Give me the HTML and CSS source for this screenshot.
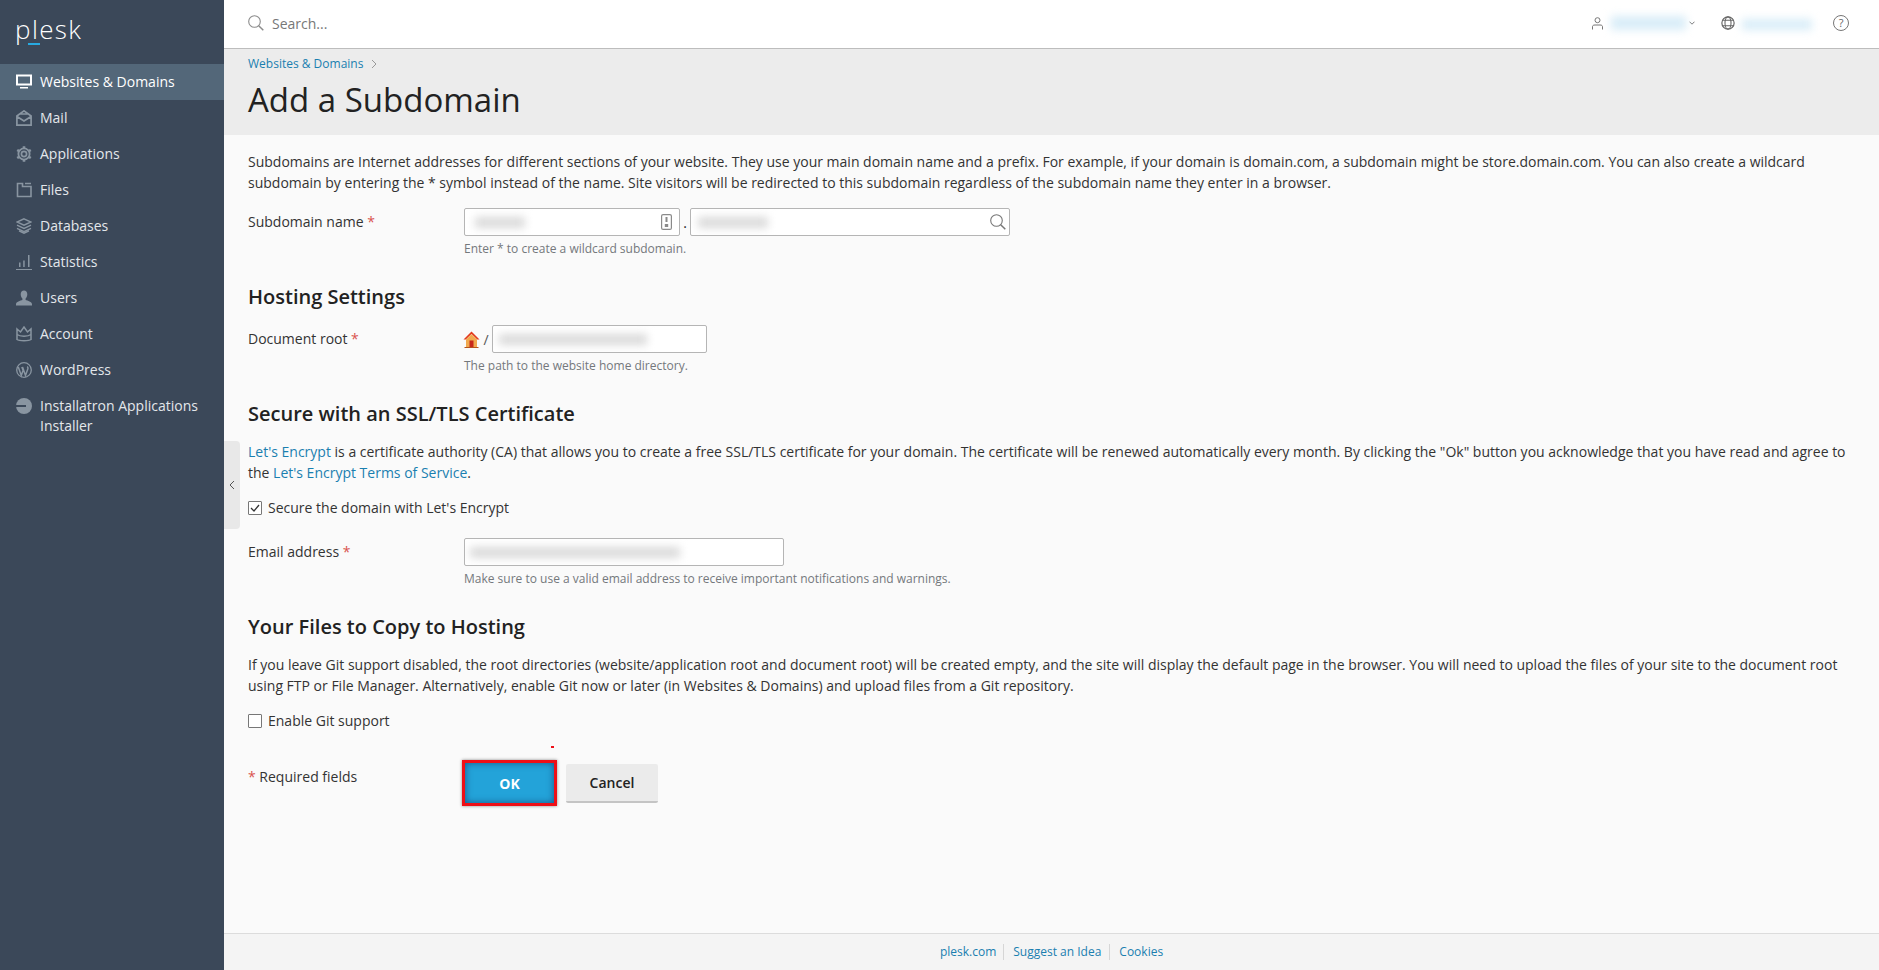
FILE: index.html
```html
<!DOCTYPE html>
<html lang="en">
<head>
<meta charset="utf-8">
<title>Add a Subdomain</title>
<link rel="stylesheet" href="styles.css">
</head>
<body>
<div class="app">
  <aside class="sidebar">
    <div class="logo"><span class="logo-text">plesk</span><span class="logo-bar"></span></div>
    <nav class="nav">
      <a class="nav-item active"><svg class="nav-icon" viewBox="0 0 16 16"><path d="M0 0.5h16v11H0z M2 2.500v7h12v-7z M4 13h8v1.600H4z" fill="#fff" fill-rule="evenodd"/></svg><span>Websites &amp; Domains</span></a>
      <a class="nav-item"><svg class="nav-icon" viewBox="0 0 16 16"><path d="M.9 6L8 .9 15.100 6v9.100H.9z M.9 6.500L8 11l7.100-4.500 M3.500 4.800V4h9v.8" fill="none" stroke="#8995a1" stroke-width="1.700"/></svg><span>Mail</span></a>
      <a class="nav-item"><svg class="nav-icon" viewBox="0 0 16 16"><circle cx="8" cy="8" r="2.600" fill="none" stroke="#8995a1" stroke-width="1.700"/><circle cx="8" cy="8" r="5.600" fill="none" stroke="#8995a1" stroke-width="1.800"/><path d="M8 .2v2.400M8 13.400v2.400M1.200 4l2 1.200M12.800 10.800l2 1.200M1.200 12l2-1.200M12.800 5.200l2-1.200" stroke="#8995a1" stroke-width="2.600"/></svg><span>Applications</span></a>
      <a class="nav-item"><svg class="nav-icon" viewBox="0 0 16 16"><path d="M1.500 1.500h5v3h8.500v10h-13.500z M9 1.500h6" fill="none" stroke="#8995a1" stroke-width="1.600"/></svg><span>Files</span></a>
      <a class="nav-item"><svg class="nav-icon" viewBox="0 0 16 16"><path d="M8 .8l7 3.200-7 3.200L1 4z" fill="none" stroke="#8995a1" stroke-width="1.400"/><path d="M1 7.200l7 3.200 7-3.200M1 10.400l7 3.200 7-3.200M3 12.800l5 2.400 5-2.400" fill="none" stroke="#8995a1" stroke-width="1.400"/></svg><span>Databases</span></a>
      <a class="nav-item"><svg class="nav-icon" viewBox="0 0 16 16"><path d="M0 15h16v1.200H0z M3 8.500h1.500V13H3z M7.200 6.500h1.500V13H7.200z M12 1h1.500v12H12z" fill="#8995a1"/></svg><span>Statistics</span></a>
      <a class="nav-item"><svg class="nav-icon" viewBox="0 0 16 16"><path d="M8 .5c2 0 3.300 1.500 3.300 3.800 0 1.800-.8 3.300-1.700 4.200v1.500c2 .7 6.400 1.700 6.400 4.200v1.300H0V14.200c0-2.500 4.400-3.500 6.400-4.200V8.500C5.500 7.600 4.700 6.100 4.700 4.300 4.700 2 6 .5 8 .5z" fill="#8995a1"/></svg><span>Users</span></a>
      <a class="nav-item"><svg class="nav-icon" viewBox="0 0 16 16"><path d="M1 3l3.500 3L8 1l3.500 5L15 3v10.500c-2 1.500-12 1.500-14 0z M1 8.500c3 2.200 11 2.200 14 0" fill="none" stroke="#8995a1" stroke-width="1.500"/></svg><span>Account</span></a>
      <a class="nav-item"><svg class="nav-icon" viewBox="0 0 16 16"><circle cx="8" cy="8" r="7.300" fill="none" stroke="#8995a1" stroke-width="1.300"/><path d="M2.300 5l3 8.500 1.800-5.200L5.800 5M6.500 5l3 8.500 2.300-6.500c.4-1.100 0-2-.8-2.200" fill="none" stroke="#8995a1" stroke-width="1.500"/></svg><span>WordPress</span></a>
      <a class="nav-item"><svg class="nav-icon" viewBox="0 0 16 16"><circle cx="8" cy="8" r="8" fill="#8995a1"/><rect x="0" y="7" width="10" height="2" fill="#3b4859"/></svg><span>Installatron Applications Installer</span></a>
    </nav>
  </aside>
  <div class="main">
    <header class="topbar">
      <div class="search">
        <svg class="search-icon" viewBox="0 0 16 16"><circle cx="6.500" cy="6.500" r="5.800" fill="none" stroke="#8c8c8c" stroke-width="1.100"/><path d="M10.700 10.700l4.600 4.600" stroke="#8c8c8c" stroke-width="1.500"/></svg>
        <span>Search...</span>
      </div>
      <div class="top-actions">
        <svg class="top-user" viewBox="0 0 11 13"><circle cx="5.500" cy="3.200" r="2.500" fill="none" stroke="#777" stroke-width="1"/><path d="M.5 12.500V9.500c0-1 1-1.500 2.500-1.500h5c1.500 0 2.500.5 2.500 1.500v3" fill="none" stroke="#777" stroke-width="1"/></svg>
        <div class="blur-user"></div>
        <svg class="top-caret" viewBox="0 0 6 4"><path d="M.5.700L3 3.200 5.500.700" fill="none" stroke="#777" stroke-width="1"/></svg>
        <svg class="top-globe" viewBox="0 0 13 13"><circle cx="6.500" cy="6.500" r="5.700" fill="none" stroke="#666" stroke-width="1.100"/><ellipse cx="6.500" cy="6.500" rx="2.800" ry="5.700" fill="none" stroke="#666" stroke-width="1"/><path d="M1.500 4h10M1.500 9h10" stroke="#666" stroke-width="1"/></svg>
        <div class="blur-domain"></div>
        <div class="help">?</div>
      </div>
    </header>
    <section class="page-head">
      <div class="crumbs"><a class="link">Websites &amp; Domains</a><svg class="crumb-chev" viewBox="0 0 6 10"><path d="M1 1l4 4-4 4" fill="none" stroke="#999" stroke-width="1"/></svg></div>
      <h1 class="title">Add a Subdomain</h1>
    </section>
    <main class="content">
      <p class="para">Subdomains are Internet addresses for different sections of your website. They use your main domain name and a prefix. For example, if your domain is domain.com, a subdomain might be store.domain.com. You can also create a wildcard subdomain by entering the * symbol instead of the name. Site visitors will be redirected to this subdomain regardless of the subdomain name they enter in a browser.</p>

      <div class="row row-sub">
        <label class="label">Subdomain name <span class="req">*</span></label>
        <div class="field">
          <div class="inputs">
            <div class="input w-sub"><div class="blur-val bv-sub"></div>
              <svg class="key" viewBox="0 0 11 16"><rect x=".6" y=".6" width="9.800" height="14.800" rx="1.500" fill="none" stroke="#8a8a8a" stroke-width="1.200"/><path d="M5.500 3v5" stroke="#8a8a8a" stroke-width="2"/><rect x="3.800" y="10" width="3.400" height="3" fill="#8a8a8a"/></svg>
            </div>
            <span class="dot">.</span>
            <div class="input w-dom"><div class="blur-val bv-dom"></div>
              <svg class="mag" viewBox="0 0 16 16"><circle cx="6.500" cy="6.500" r="5.800" fill="none" stroke="#777" stroke-width="1.100"/><path d="M10.700 10.700l4.600 4.600" stroke="#777" stroke-width="1.500"/></svg>
            </div>
          </div>
          <div class="hint">Enter * to create a wildcard subdomain.</div>
        </div>
      </div>

      <h2 class="section h-host">Hosting Settings</h2>
      <div class="row row-doc">
        <label class="label">Document root <span class="req">*</span></label>
        <div class="field">
          <div class="inputs">
            <svg class="home" viewBox="0 0 17 17"><path d="M8.500.5L.5 8.500h2.300L8.500 3l5.700 5.500h2.300z" fill="#e23b1c"/><path d="M3 8.500L8.500 3.300 14 8.500V16H3z" fill="#f1a94e"/><rect x="6.500" y="9.500" width="4" height="6.500" fill="#c8281a"/><rect x="1.500" y="16" width="14" height="1" fill="#b5531a"/></svg>
            <span class="slash">/</span>
            <div class="input w-doc"><div class="blur-val bv-doc"></div></div>
          </div>
          <div class="hint">The path to the website home directory.</div>
        </div>
      </div>

      <h2 class="section h-ssl">Secure with an SSL/TLS Certificate</h2>
      <p class="para para-ssl"><a class="link">Let's Encrypt</a> is a certificate authority (CA) that allows you to create a free SSL/TLS certificate for your domain. The certificate will be renewed automatically every month. By clicking the "Ok" button you acknowledge that you have read and agree to the <a class="link">Let's Encrypt Terms of Service</a>.</p>
      <div class="check check-ssl"><span class="box"><svg viewBox="0 0 12 12"><path d="M2 6l3 3 5-6" fill="none" stroke="#333" stroke-width="1.300"/></svg></span><span>Secure the domain with Let's Encrypt</span></div>
      <div class="row row-email">
        <label class="label">Email address <span class="req">*</span></label>
        <div class="field">
          <div class="input w-email"><div class="blur-val bv-email"></div></div>
          <div class="hint">Make sure to use a valid email address to receive important notifications and warnings.</div>
        </div>
      </div>

      <h2 class="section h-files">Your Files to Copy to Hosting</h2>
      <p class="para para-files">If you leave Git support disabled, the root directories (website/application root and document root) will be created empty, and the site will display the default page in the browser. You will need to upload the files of your site to the document root using FTP or File Manager. Alternatively, enable Git now or later (in Websites &amp; Domains) and upload files from a Git repository.</p>
      <div class="check check-git"><span class="box"></span><span>Enable Git support</span></div>

      <div class="row row-actions">
        <div class="label req-note"><span class="req">*</span> Required fields</div>
        <div class="buttons">
          <span class="mark"></span>
          <button class="btn btn-ok">OK</button>
          <button class="btn btn-cancel">Cancel</button>
        </div>
      </div>
    </main>
    <footer class="footer">
      <a class="link link-first">plesk.com</a><a class="link link-mid">Suggest an Idea</a><a class="link">Cookies</a>
    </footer>
    <div class="toggle"><svg viewBox="0 0 6 10"><path d="M5 1L1 5l4 4" fill="none" stroke="#555" stroke-width="1"/></svg></div>
  </div>
</div>
</body>
</html>
```
FILE: styles.css
```css
* { box-sizing: border-box; }
html, body { margin: 0; height: 100%; }
body { font-family: "Open Sans", "Liberation Sans", sans-serif; font-size: 14px; line-height: 21px; color: #222; overflow: hidden; }
.app { display: flex; height: 970px; }
.sidebar { width: 224px; flex: none; background: #3b4859; color: #e3e7eb; }
.logo { height: 64px; padding: 10px 0 0 15px; position: relative; }
.logo-text { font-size: 26px; font-weight: 300; line-height: 38px; color: #fff; letter-spacing: 1.400px; }
.logo-bar { position: absolute; left: 28px; top: 43px; width: 12px; height: 2px; background: #28aae1; }
.nav { display: flex; flex-direction: column; }
.nav-item { display: flex; align-items: flex-start; gap: 8px; padding: 8px 16px; line-height: 20px; min-height: 36px; }
.nav-item.active { background: #536779; color: #fff; }
.nav-icon { width: 16px; height: 16px; flex: none; margin-top: 2px; }
.main { flex: 1; display: flex; flex-direction: column; position: relative; min-width: 0; background: #fafafa; }
.topbar { height: 49px; flex: none; background: #fff; border-bottom: 1px solid #bdbdbd; box-shadow: 0 1px 1px rgba(0,0,0,.08); display: flex; align-items: center; justify-content: space-between; padding: 0 30px 2px 24px; }
.search { display: flex; align-items: center; gap: 8px; color: #777; }
.search-icon { width: 16px; height: 16px; }
.top-actions { display: flex; align-items: center; }
.top-user { width: 11px; height: 13px; }
.blur-user { width: 75px; height: 14px; margin: 0 3px 0 8px; background: #d9edf8; filter: blur(4px); }
.top-caret { width: 6px; height: 4px; }
.top-globe { width: 14px; height: 14px; margin-left: 26px; }
.blur-domain { width: 70px; height: 11px; margin: 2px 0 0 7px; background: #d9edf8; filter: blur(4px); }
.help { width: 16px; height: 16px; margin-left: 21px; border: 1px solid #777; border-radius: 50%; font-size: 11px; line-height: 14px; text-align: center; color: #666; }
.page-head { height: 86px; flex: none; background: #ececec; padding: 4px 24px 0; }
.crumbs { display: flex; align-items: center; gap: 8px; font-size: 12px; line-height: 22px; }
.crumb-chev { width: 6px; height: 10px; }
.title { margin: 4px 0 0; font-size: 33px; line-height: 42px; font-weight: 500; color: #222; }
.link { color: #1a7fb0; }
.content { flex: 1; padding: 16px 24px 0; min-height: 0; }
.para { margin: 0; color: #333; }
.row { display: grid; grid-template-columns: 216px 1fr; }
.label { padding-top: 3px; color: #333; }
.req { color: #d9534f; }
.inputs { display: flex; align-items: center; }
.input { height: 28px; background: #fff; border: 1px solid #b5b5b5; border-radius: 2px; display: flex; align-items: center; justify-content: space-between; padding: 0 3px 0 5px; overflow: hidden; }
.w-sub { width: 216px; }
.w-dom { width: 320px; }
.w-doc { width: 215px; }
.w-email { width: 320px; }
.blur-val { height: 11px; background: #dadada; filter: blur(4px); }
.bv-sub { width: 50px; margin-left: 5px; }
.bv-dom { width: 70px; margin-left: 2px; }
.bv-doc { width: 148px; margin-left: 1px; }
.bv-email { width: 210px; }
.key { width: 11px; height: 16px; margin-right: 4px; }
.mag { width: 16px; height: 16px; }
.dot { width: 10px; text-align: center; }
.home { width: 17px; height: 17px; margin-left: -1px; }
.slash { width: 12px; text-align: center; color: #555; }
.hint { font-size: 12px; line-height: 16px; color: #74787c; margin-top: 5px; }
.section { margin: 0; font-size: 20px; line-height: 26px; font-weight: 600; color: #222; }
.row-sub { margin-top: 15px; }
.h-host { margin-top: 27px; }
.row-doc { margin-top: 15px; }
.h-ssl { margin-top: 27px; }
.para-ssl { margin-top: 14px; }
.check { display: flex; align-items: center; gap: 6px; color: #333; }
.box { width: 14px; height: 14px; flex: none; background: #fff; border: 1px solid #777; border-radius: 1px; display: block; }
.box svg { display: block; width: 12px; height: 12px; }
.check-ssl { margin-top: 14px; }
.row-email { margin-top: 20px; }
.h-files { margin-top: 27px; }
.para-files { margin-top: 14px; }
.check-git { margin-top: 14px; }
.row-actions { margin-top: 29px; align-items: center; height: 46px; }
.req-note { padding-top: 0; margin-top: -14px; }
.buttons { display: flex; align-items: center; position: relative; margin-left: -2px; gap: 9px; }
.btn { font: inherit; border: 0; cursor: pointer; }
.btn-ok { width: 95px; height: 46px; background: #23a3d9; border: 3px solid #ee0f17; box-shadow: 0 0 3px rgba(0,0,0,.45), inset 0 0 7px rgba(20,70,120,.85); color: #fff; font-weight: 700; }
.btn-cancel { width: 92px; height: 39px; background: #ebebeb; border-bottom: 2px solid #c4c4c4; border-radius: 2px; color: #222; font-weight: 600; }
.mark { position: absolute; left: 89px; top: -14px; width: 3px; height: 2px; background: #ee0f17; }
.footer { height: 37px; flex: none; background: #f4f4f4; border-top: 1px solid #dcdcdc; display: flex; justify-content: center; align-items: center; font-size: 12px; }
.footer .link { padding: 0 9px; line-height: 16px; }
.footer .link-first { padding-right: 7px; }
.footer .link-mid { padding-right: 8px; }
.footer .link + .link { border-left: 1px solid #d6d6d6; }
.toggle { position: absolute; left: 0; top: 441px; width: 16px; height: 88px; background: #e8e8e8; border-radius: 0 4px 4px 0; display: flex; align-items: center; justify-content: center; }
.toggle svg { width: 6px; height: 10px; }
```
